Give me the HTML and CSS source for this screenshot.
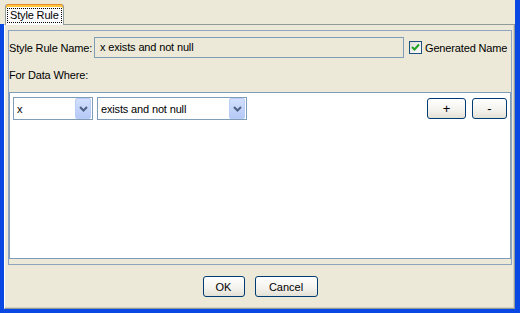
FILE: index.html
```html
<!DOCTYPE html>
<html lang="en">
<head>
    <meta charset="UTF-8">
    <meta name="viewport" content="width=device-width, initial-scale=1.0">
    <title>Style Rule</title>
    <link rel="stylesheet" href="styles.css">
</head>
<body>
    <div class="window">
        <div class="tabs">
            <div class="tab"><span class="tab-label">Style Rule</span></div>
        </div>
        <div class="frame">
            <div class="panel">
                <div class="group">
                    <div class="name-row">
                        <span class="name-label">Style Rule Name:</span>
                        <div class="field">x exists and not null</div>
                        <span class="checkbox">
                            <svg width="11" height="11" viewBox="0 0 11 11">
                                <polyline points="2,5 4.5,7.5 9,2.5" fill="none" stroke="#21a121" stroke-width="2"/>
                            </svg>
                        </span>
                        <span class="check-label">Generated Name</span>
                    </div>
                    <div class="where-label">For Data Where:</div>
                    <div class="rules">
                        <div class="rule-row">
                            <div class="combo combo-field">
                                <span class="combo-text">x</span>
                                <span class="combo-btn">
                                    <svg width="9" height="6" viewBox="0 0 9 6">
                                        <polyline points="1,1 4.5,4.5 8,1" fill="none" stroke="#4d6185" stroke-width="2"/>
                                    </svg>
                                </span>
                            </div>
                            <div class="combo combo-op">
                                <span class="combo-text">exists and not null</span>
                                <span class="combo-btn">
                                    <svg width="9" height="6" viewBox="0 0 9 6">
                                        <polyline points="1,1 4.5,4.5 8,1" fill="none" stroke="#4d6185" stroke-width="2"/>
                                    </svg>
                                </span>
                            </div>
                            <button class="btn btn-add">+</button>
                            <button class="btn btn-remove">-</button>
                        </div>
                    </div>
                </div>
                <div class="actions">
                    <button class="btn btn-ok">OK</button>
                    <button class="btn btn-cancel">Cancel</button>
                </div>
            </div>
        </div>
    </div>
</body>
</html>
```

FILE: styles.css
```css
body {
    margin: 0;
    background-color: #ece9d8;
    font-family: "Liberation Sans", Arial, sans-serif;
    font-size: 11px;
    letter-spacing: -0.15px;
    color: #000;
    white-space: nowrap;
}
.window {
    width: 520px;
    height: 313px;
    box-sizing: border-box;
    border-right: 5px solid #0a48e4;
    display: flex;
    flex-direction: column;
}
.tabs {
    height: 24px;
    padding-left: 5px;
    display: flex;
    align-items: flex-end;
    flex-shrink: 0;
}
.tab {
    position: relative;
    z-index: 1;
    width: 59px;
    height: 21px;
    margin-bottom: -1px;
    box-sizing: border-box;
    border-left: 1px solid #919b9c;
    border-right: 1px solid #919b9c;
    border-radius: 3px 3px 0 0;
    background-color: #fcfcfe;
    box-shadow: inset 0 1px 0 #e68b2c, inset 0 3px 0 #ffc73c;
}
.tab-label {
    display: block;
    margin: 4px 1px 0;
    height: 13px;
    line-height: 13px;
    padding-left: 2px;
    border: 1px dotted #000;
}
.frame {
    flex: 1;
    display: flex;
    border-left: 4px solid #0a48e4;
    border-bottom: 4px solid #0a48e4;
}
.panel {
    flex: 1;
    display: flex;
    flex-direction: column;
    border: 1px solid #919b9c;
    border-left-color: #fff;
    box-shadow: inset -1px -1px 0 #d4d0c4;
    padding: 5px 2px 0 3px;
}
.group {
    height: 235px;
    box-sizing: border-box;
    border: 1px solid #8ea4c1;
    padding: 6px 0 5px;
    display: flex;
    flex-direction: column;
}
.name-row {
    display: flex;
    align-items: center;
    height: 21px;
}
.name-label {
    width: 85px;
    flex-shrink: 0;
}
.field {
    width: 310px;
    height: 21px;
    flex-shrink: 0;
    box-sizing: border-box;
    border: 1px solid #7f9db9;
    padding-left: 5px;
    line-height: 19px;
}
.checkbox {
    width: 13px;
    height: 13px;
    flex-shrink: 0;
    box-sizing: border-box;
    margin-left: 5px;
    border: 1px solid #1c5180;
    background: linear-gradient(135deg, #dcdcd7, #fff);
    display: flex;
    align-items: center;
    justify-content: center;
}
.check-label {
    margin-left: 3px;
}
.where-label {
    line-height: 13px;
    margin: 11px 0 10px;
}
.rules {
    flex: 1;
    border: 1px solid #7f9db9;
    background-color: #fff;
    padding: 4px 3px;
}
.rule-row {
    display: flex;
    align-items: flex-start;
    gap: 4px;
}
.combo {
    height: 23px;
    box-sizing: border-box;
    border: 1px solid #7f9db9;
    display: flex;
    align-items: center;
    padding: 0 1px 0 3px;
}
.combo-field {
    width: 80px;
}
.combo-op {
    width: 150px;
}
.combo-text {
    flex: 1;
}
.combo-btn {
    width: 16px;
    height: 21px;
    box-sizing: border-box;
    border: 1px solid #bacdf6;
    border-radius: 2px;
    background: linear-gradient(#d2e0fd, #b5c9f7);
    display: flex;
    align-items: center;
    justify-content: center;
}
.btn {
    height: 21px;
    box-sizing: border-box;
    border: 1px solid #003c74;
    border-radius: 3px;
    background: linear-gradient(#fff, #f3f2ec 60%, #e3e0d5);
    font-family: inherit;
    font-size: 11px;
    padding: 0;
    color: #000;
}
.btn-add {
    width: 39px;
    margin: 1px 0 0 auto;
    font-size: 13px;
}
.btn-remove {
    width: 35px;
    margin: 1px 0 0 2px;
    font-size: 13px;
}
.actions {
    margin-top: 11px;
    display: flex;
    justify-content: center;
    gap: 10px;
}
.btn-ok {
    width: 42px;
}
.btn-cancel {
    width: 63px;
}
```
